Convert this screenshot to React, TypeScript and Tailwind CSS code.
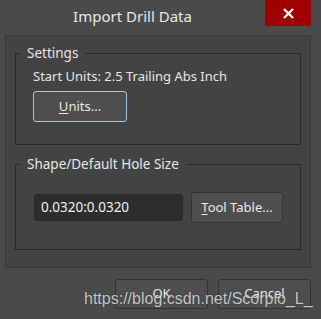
import React from "react";

const ui = { fontFamily: '"Noto Sans", "Open Sans", sans-serif' };

export default function App() {
  return (
    <div
      className="relative w-[321px] h-[319px] bg-[#4a4a4a] text-[#e6e6e6] overflow-hidden flex flex-col"
      style={ui}
    >
      {/* title bar */}
      <div className="flex h-[35px] shrink-0">
        <div className="flex-1 text-center text-[15px] leading-[22px] pt-[5px] text-[#e8e8e8]">
          Import Drill Data
        </div>
        <div className="w-[46px] h-[26px] mr-[10px] bg-[#a00000] flex items-center justify-center">
          <svg width="11" height="11" viewBox="0 0 11 11">
            <path d="M1 1 L10 10 M10 1 L1 10" stroke="#ffffff" strokeWidth="2.4" />
          </svg>
        </div>
      </div>

      {/* main panel */}
      <div className="mx-[5px] w-[306px] h-[233px] shrink-0 border border-[#393939] bg-[#434343] px-[9px] pt-[8px] flex flex-col">
        <fieldset className="border border-[#2a2a2a] pb-[22px]">
          <legend className="ml-[4px] px-[7px] text-[13.5px] leading-[18px]">Settings</legend>
          <div className="pl-[17px]">
            <div className="mt-[5px] text-[13px] leading-[18px]">Start Units: 2.5 Trailing Abs Inch</div>
            <button className="mt-[6px] w-[94px] h-[31px] rounded-[3px] border border-[#9cc8ee] bg-[#4e4e4e] text-[13px] text-[#e8e8e8] flex items-center justify-center">
              <span>
                <span className="underline underline-offset-2">U</span>nits...
              </span>
            </button>
          </div>
        </fieldset>

        <fieldset className="mt-[10px] border border-[#2a2a2a] pb-[26px]">
          <legend className="ml-[4px] px-[7px] text-[13.5px] leading-[18px]">Shape/Default Hole Size</legend>
          <div className="pl-[18px] mt-[19px] flex items-center gap-[8px]">
            <div className="w-[149px] h-[27px] rounded-[3px] border border-[#2a2a2a] bg-[#2d2d2d] text-[13.5px] leading-[25px] pl-[6px] text-[#f0f0f0]">
              0.0320:0.0320
            </div>
            <button className="w-[92px] h-[31px] rounded-[3px] border border-[#333333] bg-[#4e4e4e] text-[13px] text-[#e8e8e8] flex items-center justify-center">
              <span>
                <span className="underline underline-offset-2">T</span>ool Table...
              </span>
            </button>
          </div>
        </fieldset>
      </div>

      {/* bottom buttons */}
      <div className="mt-[11px] flex justify-end gap-[10px] pr-[10px]">
        <button className="w-[93px] h-[30px] rounded-[3px] border border-[#333333] bg-[#4e4e4e] text-[13px] text-[#e8e8e8]">
          OK
        </button>
        <button className="w-[93px] h-[30px] rounded-[3px] border border-[#333333] bg-[#4e4e4e] text-[13px] text-[#e8e8e8]">
          Cancel
        </button>
      </div>

      {/* watermark */}
      <div
        className="absolute left-[84px] top-[290px] text-[16px] leading-[18px] text-[#d4d4d4] opacity-90 whitespace-nowrap"
        style={{ fontFamily: '"Liberation Sans", Arial, sans-serif', textShadow: "0 0 1px rgba(0,0,0,0.5)" }}
      >
        https://blog.csdn.net/Scorpio_L_
      </div>
    </div>
  );
}
